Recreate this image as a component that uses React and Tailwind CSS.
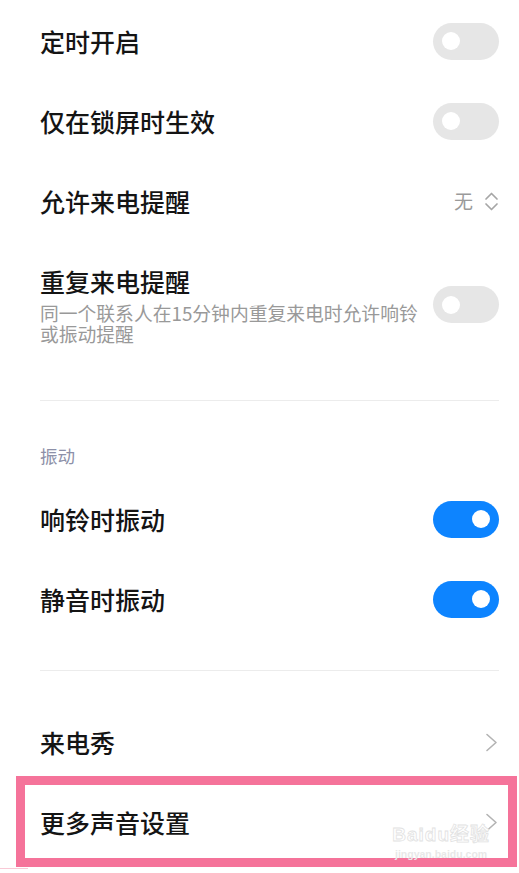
import React from "react";

const CJK = { fontFamily: '"Noto Sans CJK SC", "Noto Sans", sans-serif' };

function Toggle({ on }) {
  return (
    <div
      className={
        "flex items-center w-[66px] h-[37px] rounded-full shrink-0 " +
        (on ? "bg-[#0d84ff] justify-end pr-[9px]" : "bg-[#e6e6e6] justify-start pl-[9px]")
      }
    >
      <div className="w-[18px] h-[18px] rounded-full bg-white" />
    </div>
  );
}

function Chevron() {
  return (
    <svg width="13" height="19" viewBox="0 0 13 19" className="shrink-0 mr-[1px]">
      <path d="M2 1.5 L11 9.5 L2 17.5" fill="none" stroke="#b3b3b3" strokeWidth="1.6" strokeLinecap="round" strokeLinejoin="round" />
    </svg>
  );
}

function UpDown() {
  return (
    <svg width="15" height="21" viewBox="0 0 15 21" className="shrink-0">
      <path d="M2 8 L7.5 2.5 L13 8" fill="none" stroke="#a6a6a6" strokeWidth="1.7" strokeLinecap="round" strokeLinejoin="round" />
      <path d="M2 13 L7.5 18.5 L13 13" fill="none" stroke="#a6a6a6" strokeWidth="1.7" strokeLinecap="round" strokeLinejoin="round" />
    </svg>
  );
}

function Row({ title, right }) {
  return (
    <div className="flex items-center justify-between h-[80px]">
      <span className="text-[25px] leading-[32px] font-medium text-[#141414]">{title}</span>
      {right}
    </div>
  );
}

export default function App() {
  return (
    <div className="w-[519px] h-[873px] bg-white overflow-hidden relative" style={CJK}>
      <div className="flex flex-col pl-[40px] pr-[20px] pt-[1px]">
        <Row title="定时开启" right={<Toggle />} />
        <Row title="仅在锁屏时生效" right={<Toggle />} />
        <Row
          title="允许来电提醒"
          right={
            <div className="flex items-center gap-[11px]">
              <span className="text-[19px] leading-[24px] text-[#9a9a9a]">无</span>
              <UpDown />
            </div>
          }
        />
        <div className="flex items-center justify-between pt-[24px] pb-[56px]">
          <div className="flex flex-col">
            <span className="text-[25px] leading-[32px] font-medium text-[#141414]">重复来电提醒</span>
            <span className="mt-[5px] text-[18.8px] leading-[21px] text-[#999999] whitespace-nowrap">
              同一个联系人在15分钟内重复来电时允许响铃<br />或振动提醒
            </span>
          </div>
          <Toggle />
        </div>
        <div className="h-[1px] bg-[#ececec]" />
        <div className="pt-[43px] pb-[11px]">
          <span className="text-[17.5px] leading-[24px] text-[#8d90a8]">振动</span>
        </div>
        <Row title="响铃时振动" right={<Toggle on />} />
        <Row title="静音时振动" right={<Toggle on />} />
        <div className="h-[1px] bg-[#ececec] mt-[31px]" />
        <div className="mt-[31px]">
          <Row title="来电秀" right={<Chevron />} />
        </div>
        <div className="relative">
          <Row title="更多声音设置" right={<Chevron />} />
          <div className="absolute top-[-6px] bottom-[-5px] left-[-24px] right-[-18px] border-[9px] border-[#f5739a] pointer-events-none" />
          <div className="absolute right-[9px] top-[43px] flex flex-col items-center leading-none pointer-events-none">
            <span
              className="text-[19px] font-bold text-white tracking-[1px]"
              style={{ fontFamily: '"Liberation Sans", "Noto Sans CJK SC", sans-serif', WebkitTextStroke: "0.8px #e2e2e2" }}
            >
              Baidu经验
            </span>
            <span
              className="mt-[5px] text-[10.5px] font-bold text-[#e8e8e8]"
              style={{ fontFamily: '"Liberation Sans", sans-serif' }}
            >
              jingyan.baidu.com
            </span>
          </div>
        </div>
      </div>
      <div className="absolute left-0 top-[868px] w-[28px] h-[1px] bg-[#f9c9d6]" />
    </div>
  );
}
